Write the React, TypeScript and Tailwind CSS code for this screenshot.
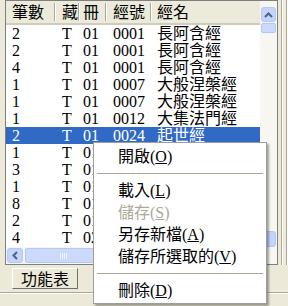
import React from "react";

type Row = { n: string; z: string; c: string; no: string; name: string };

const rows: Row[] = [
  { n: "2", z: "T", c: "01", no: "0001", name: "長阿含經" },
  { n: "2", z: "T", c: "01", no: "0001", name: "長阿含經" },
  { n: "4", z: "T", c: "01", no: "0001", name: "長阿含經" },
  { n: "1", z: "T", c: "01", no: "0007", name: "大般涅槃經" },
  { n: "1", z: "T", c: "01", no: "0007", name: "大般涅槃經" },
  { n: "1", z: "T", c: "01", no: "0012", name: "大集法門經" },
  { n: "2", z: "T", c: "01", no: "0024", name: "起世經" },
  { n: "1", z: "T", c: "01", no: "0025", name: "起世因本經" },
  { n: "3", z: "T", c: "01", no: "0026", name: "中阿含經" },
  { n: "1", z: "T", c: "01", no: "0030", name: "薩鉢多酥哩經" },
  { n: "8", z: "T", c: "01", no: "0045", name: "大正句王經" },
  { n: "2", z: "T", c: "01", no: "0094", name: "箭喻經" },
  { n: "4", z: "T", c: "02", no: "0099", name: "雜阿含經" },
];

const SELECTED = 6;

function UpArrow() {
  return (
    <svg width="9" height="6" viewBox="0 0 9 6">
      <path d="M1 5 L4.5 1.5 L8 5" fill="none" stroke="#4d6185" strokeWidth="2" />
    </svg>
  );
}

function LeftArrow() {
  return (
    <svg width="6" height="9" viewBox="0 0 6 9">
      <path d="M5 1 L1.5 4.5 L5 8" fill="none" stroke="#4d6185" strokeWidth="2" />
    </svg>
  );
}

function HeaderCell({ w, pl, children, last }: { w?: string; pl: string; children: React.ReactNode; last?: boolean }) {
  return (
    <div className={`${w ?? "flex-1"} ${pl} flex h-full shrink-0 items-center`}>
      <span className="flex-1 whitespace-nowrap">{children}</span>
      {!last && (
        <span className="flex h-[18px] w-[2px] shrink-0">
          <span className="w-px bg-[#aca899]" />
          <span className="w-px bg-white" />
        </span>
      )}
    </div>
  );
}

function MenuItem({ label, k, disabled }: { label: string; k: string; disabled?: boolean }) {
  return (
    <div className={`flex h-[22px] items-center pl-[24px] ${disabled ? "text-[#aca899]" : "text-black"}`}>
      {label}(<u>{k}</u>)
    </div>
  );
}

function Sep() {
  return (
    <div className="flex h-[12px] items-center px-[3px]">
      <div className="h-px w-full bg-[#aca899]" />
    </div>
  );
}

export default function App() {
  return (
    <div className="relative h-[306px] w-[288px] overflow-hidden bg-[#ece9d8] font-['Liberation_Serif','Noto_Sans_CJK_TC',serif] text-[16px] leading-[17px] text-black">
      <div className="flex h-[265px]">
        <div className="w-[5px] shrink-0" />
        {/* list view */}
        <div className="flex w-[273px] shrink-0 flex-col border border-[#7f7f7f] bg-white">
          <div className="flex h-[246px]">
            <div className="flex w-[254px] flex-col overflow-hidden">
              <div className="flex h-[24px] shrink-0 border-b-2 border-[#d0ccbc] bg-[#ebeadb]">
                <HeaderCell w="w-[50px]" pl="pl-[6px]">筆數</HeaderCell>
                <HeaderCell w="w-[21px]" pl="pl-[6px]">藏</HeaderCell>
                <HeaderCell w="w-[30px]" pl="pl-[6px]">冊</HeaderCell>
                <HeaderCell w="w-[45px]" pl="pl-[6px]">經號</HeaderCell>
                <HeaderCell pl="pl-[5px]" last>經名</HeaderCell>
              </div>
              <div className="flex flex-col">
                {rows.map((r, i) => (
                  <div
                    key={i}
                    className={`flex h-[17px] shrink-0 whitespace-nowrap ${i === SELECTED ? "bg-[#316ac5] text-white" : ""}`}
                  >
                    <div className="w-[50px] shrink-0 pl-[6px]">{r.n}</div>
                    <div className="w-[21px] shrink-0 pl-[6px]">{r.z}</div>
                    <div className="w-[30px] shrink-0 pl-[6px]">{r.c}</div>
                    <div className="w-[45px] shrink-0 pl-[6px]">{r.no}</div>
                    <div className="min-w-0 flex-1 overflow-hidden pl-[5px]">{r.name}</div>
                  </div>
                ))}
              </div>
            </div>
            {/* vertical scrollbar */}
            <div className="flex w-[17px] shrink-0 flex-col bg-[#f7f6f1] pt-[6px]">
              <div className="mx-px flex h-[15px] items-center justify-center rounded-[3px] border border-[#b4c8f6] bg-[#c4d4fb]">
                <UpArrow />
              </div>
              <div className="mx-px mt-px h-[10px] rounded-[2px] border border-[#b4c8f6] bg-[#cdd9fb]" />
              <div className="flex-1" />
              <div className="mx-px h-[16px] rounded-[3px] border border-[#b4c8f6] bg-[#c4d4fb]" />
            </div>
          </div>
          {/* horizontal scrollbar */}
          <div className="flex h-[17px] bg-[#f7f6f1]">
            <div className="my-px ml-px flex w-[16px] items-center justify-center rounded-[3px] border border-[#b4c8f6] bg-[#c4d4fb]">
              <LeftArrow />
            </div>
            <div className="my-px ml-[2px] flex w-[120px] items-center justify-center rounded-[2px] border border-[#b4c8f6] bg-[#cdd9fb]">
              <span className="ml-[-44px] flex gap-px">
                <span className="h-[6px] w-px bg-[#eef2fd]" />
                <span className="h-[6px] w-px bg-[#eef2fd]" />
                <span className="h-[6px] w-px bg-[#eef2fd]" />
                <span className="h-[6px] w-px bg-[#eef2fd]" />
              </span>
            </div>
            <div className="flex-1" />
          </div>
        </div>
        {/* window frame on right */}
        <div className="flex w-[10px] shrink-0">
          <div className="w-[3px]" />
          <div className="w-px bg-[#aca899]" />
          <div className="w-px bg-white" />
          <div className="w-[3px]" />
          <div className="w-px bg-[#aca899]" />
          <div className="w-px bg-white" />
        </div>
      </div>

      {/* bottom area */}
      <div className="flex h-[24px] items-end pl-[12px]">
        <button
          type="button"
          className="flex h-[21px] w-[66px] items-center justify-center border border-b-[#716f64] border-l-white border-r-[#716f64] border-t-white bg-[#ece9d8] pt-px"
        >
          功能表
        </button>
      </div>
      <div className="mt-[3px] h-px w-full bg-[#aca899]" />
      <div className="h-px w-full bg-white" />

      {/* context menu */}
      <div className="absolute left-[93px] top-[142px] w-[174px] border border-[#9d9d9d] bg-white py-[2px] shadow-[2px_2px_2px_rgba(0,0,0,0.35)]">
        <MenuItem label="開啟" k="O" />
        <Sep />
        <MenuItem label="載入" k="L" />
        <MenuItem label="儲存" k="S" disabled />
        <MenuItem label="另存新檔" k="A" />
        <MenuItem label="儲存所選取的" k="V" />
        <Sep />
        <MenuItem label="刪除" k="D" />
      </div>
    </div>
  );
}
